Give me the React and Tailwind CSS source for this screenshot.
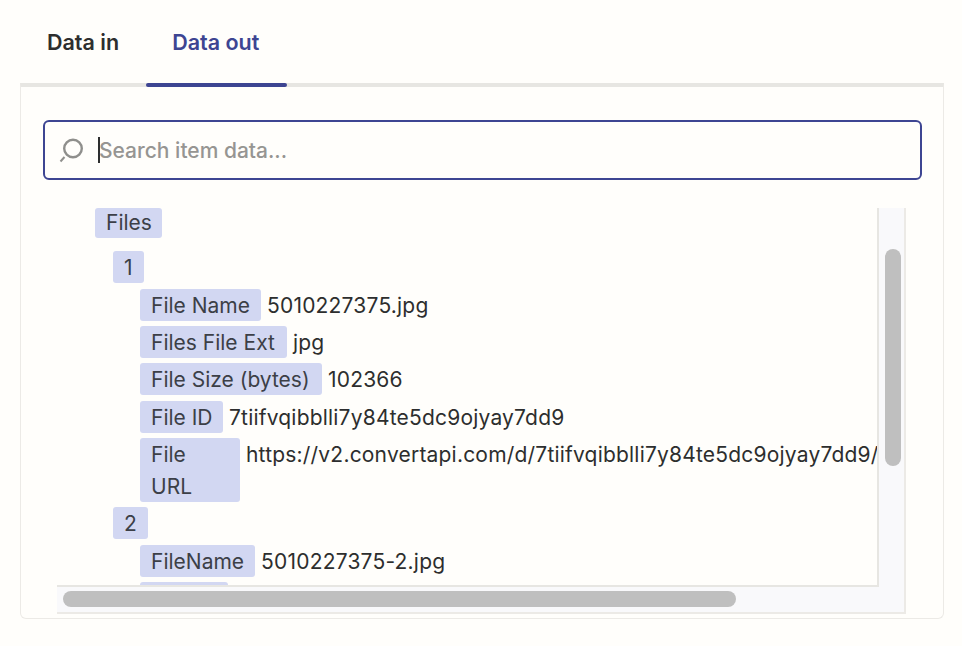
import React from "react";

const font = { fontFamily: "Inter, sans-serif" };

function Pill({ children, className = "h-8" }) {
    return (
        <span className={`block shrink-0 rounded-[3px] bg-[#d2d7f2] px-[11px] pt-px text-[#3c3f47] ${className}`}>
            {children}
        </span>
    );
}

function Row({ label, value, labelClass }) {
    return (
        <div className="flex items-start gap-[6px]">
            <Pill className={labelClass}>{label}</Pill>
            <span className="h-8 whitespace-nowrap pt-px tracking-[0.2px] text-[#2d2e2e]">{value}</span>
        </div>
    );
}

export default function App() {
    return (
        <div className="h-[646px] w-[962px] overflow-hidden bg-[#fffefb] px-5" style={font}>
            <div className="flex h-[83px] items-start">
                <button className="mt-[28px] ml-[27px] text-[21.5px] leading-[28px] font-semibold text-[#2d2e2e]">Data in</button>
                <button className="mt-[28px] ml-[53px] text-[21.5px] leading-[28px] font-semibold text-[#3d4592]">Data out</button>
            </div>

            <div className="relative h-[536px] w-[924px] rounded-b-md border-x border-b border-[#eceae6] border-t-4 border-t-[#e7e6e2]">
                <div className="absolute -top-1 left-[125px] h-1 w-[141px] rounded-[2px] bg-[#3d4592]" />

                <div className="pt-[33px] pl-[22px]">
                    <div className="flex h-[60px] w-[879px] items-center rounded-md border-2 border-[#3d4592] pl-[14px]">
                        <svg width="28" height="28" viewBox="0 0 28 28" fill="none" stroke="#8f8f8c" className="shrink-0">
                            <circle cx="14" cy="12.5" r="8.8" strokeWidth="2.4" />
                            <path d="M5.5 21 L1.5 25.5" strokeWidth="2" />
                        </svg>
                        <div className="ml-[11px] h-[26px] w-[2px] bg-[#2d2e2e]" />
                        <span className="-ml-[1px] pt-[2px] text-[21px] leading-[28px] font-medium text-[#969592]">Search item data...</span>
                    </div>
                </div>

                <div className="mt-[28px] ml-[36px] grid h-[406px] w-[849px] grid-cols-[822px_27px] grid-rows-[379px_27px] text-[21px] leading-[32px]">
                    <div className="overflow-hidden border-r-2 border-b-2 border-[#e7e6e2]">
                        <div className="flex pl-[38px]">
                            <Pill className="h-[30px] w-[67px] leading-[28px]">Files</Pill>
                        </div>
                        <div className="flex flex-col items-start gap-[5.33px] pt-[13.3px] pl-[56px]">
                            <Pill>1</Pill>
                            <div className="flex flex-col gap-[5.33px] pl-[27px]">
                                <Row label="File Name" value="5010227375.jpg" labelClass="h-8" />
                                <Row label="Files File Ext" value="jpg" labelClass="h-8 w-[147px] whitespace-nowrap" />
                                <Row label="File Size (bytes)" value="102366" labelClass="h-8 w-[182px] whitespace-nowrap" />
                                <Row label="File ID" value="7tiifvqibblli7y84te5dc9ojyay7dd9" labelClass="h-8 w-[83px] whitespace-nowrap" />
                                <Row
                                    label="File URL"
                                    labelClass="h-16 w-[100px]"
                                    value="https://v2.convertapi.com/d/7tiifvqibblli7y84te5dc9ojyay7dd9/"
                                />
                            </div>
                            <Pill>2</Pill>
                            <div className="flex flex-col gap-[5.33px] pl-[27px]">
                                <Row label="FileName" value="5010227375-2.jpg" labelClass="h-8" />
                                {/* only the top of this pill shows above the scrollbar */}
                                <Pill className="h-8 w-[88px]" />
                            </div>
                        </div>
                    </div>

                    <div className="relative border-r-2 border-[#eceae6] bg-[#f9f9fb]">
                        <div className="absolute top-[41px] left-[6px] h-[217px] w-4 rounded-lg bg-[#bfbfbf]" />
                    </div>
                    <div className="relative border-b-2 border-[#eceae6] bg-[#f9f9fb]">
                        <div className="absolute top-[4px] left-[6px] h-4 w-[673px] rounded-lg bg-[#bfbfbf]" />
                    </div>
                    <div className="border-r-2 border-b-2 border-[#eceae6] bg-[#f9f9fb]" />
                </div>
            </div>
        </div>
    );
}
